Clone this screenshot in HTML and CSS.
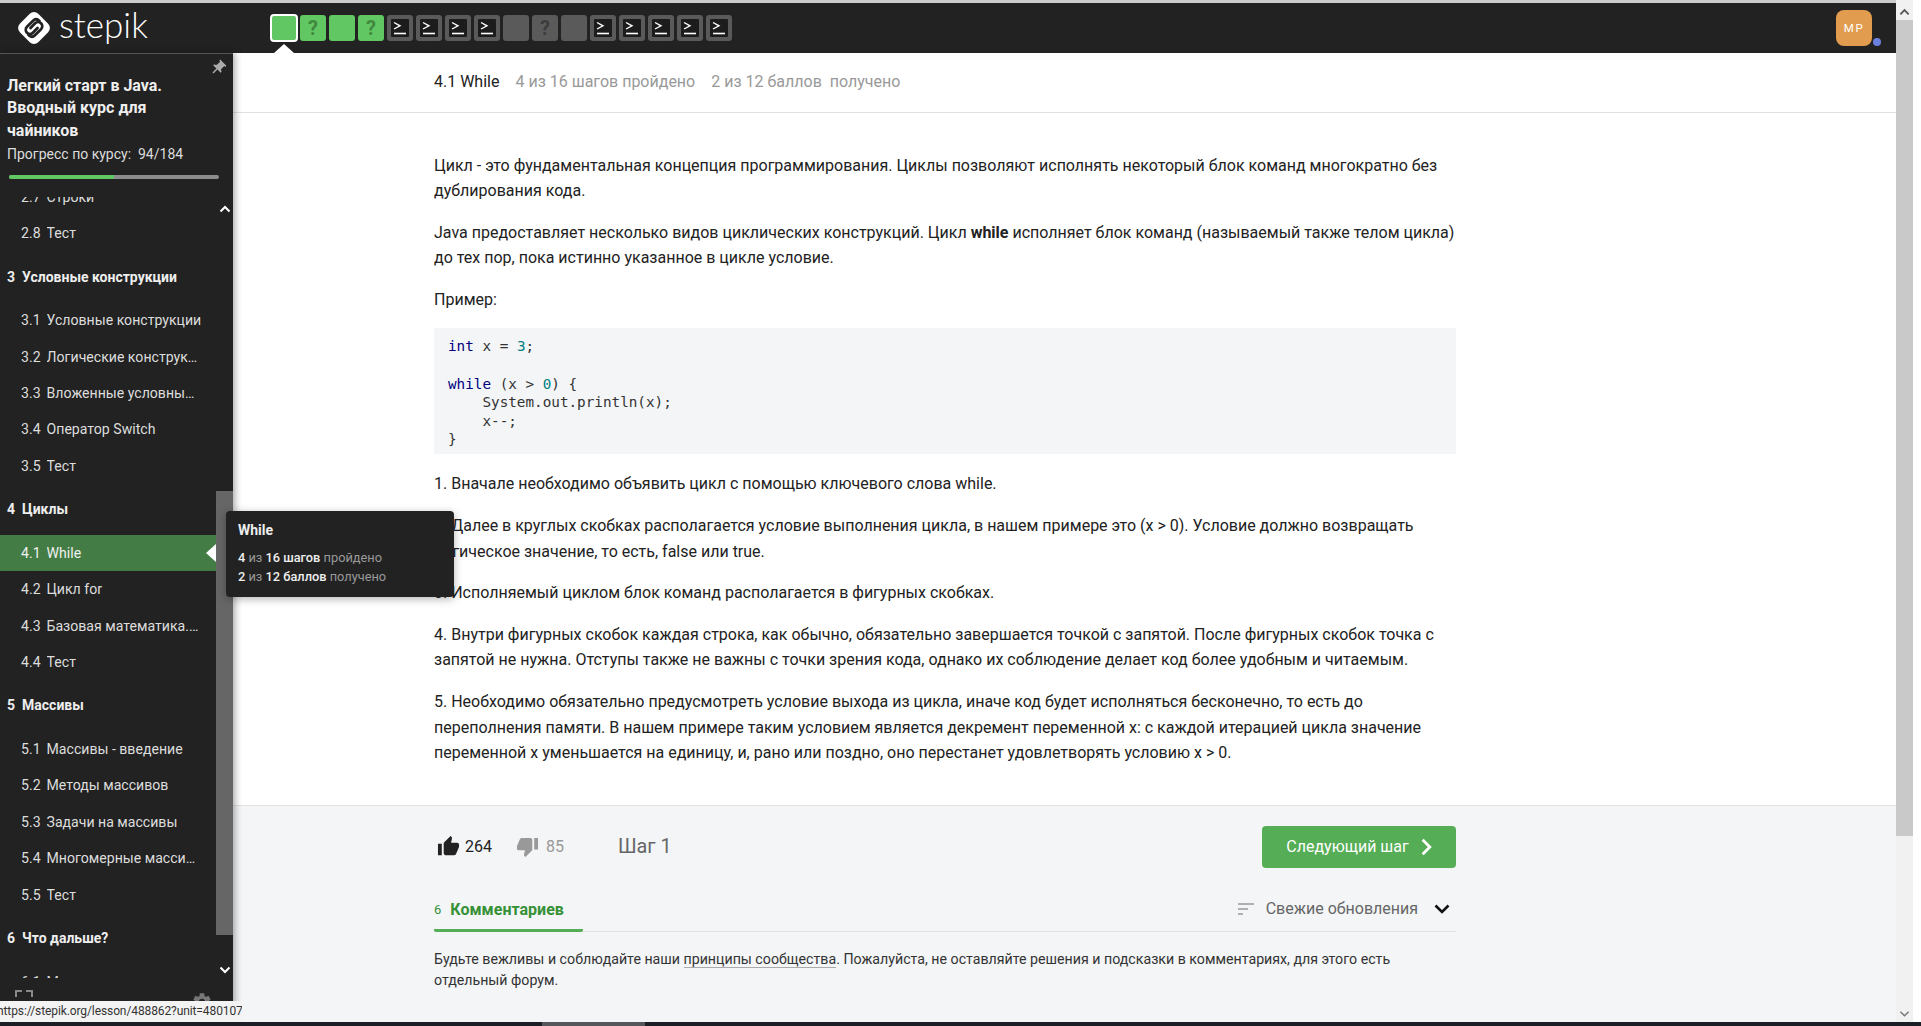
FILE: index.html
```html
<!DOCTYPE html>
<html lang="ru">
<head>
<meta charset="utf-8">
<title>4.1 While</title>
<link rel="stylesheet" href="styles.css">
</head>
<body>
<svg class="defs" width="0" height="0">
  <symbol id="prompt" viewBox="0 0 18 18">
    <rect width="18" height="18" rx="1" fill="#1c1c1c"/>
    <path d="M3 3.5 L9 6.8 L3 10" fill="none" stroke="#fff" stroke-width="1.4"/>
    <path d="M3 14.5 H15" stroke="#fff" stroke-width="1.6"/>
  </symbol>
</svg>
<div class="app">
  <div class="page">
    <div class="window">
      <header class="topbar">
        <div class="brand">
          <svg class="logo" viewBox="0 0 32 32" aria-hidden="true">
            <rect x="3" y="3" width="26" height="26" rx="6" fill="#fff" transform="rotate(45 16 16)"/>
            <path d="M21.5 9 l-.8 -.6 a4.2 4.2 0 0 0 -5.6 .3 L9 14.8 a4.2 4.2 0 0 0 0 5.9 a4.2 4.2 0 0 0 5.9 0 L19.5 16" fill="none" stroke="#222" stroke-width="2.8" stroke-linecap="round"/>
            <path d="M10.5 23 l.8 .6 a4.2 4.2 0 0 0 5.6 -.3 L23 17.2 a4.2 4.2 0 0 0 0 -5.9 a4.2 4.2 0 0 0 -5.9 0 L12.5 16" fill="none" stroke="#222" stroke-width="2.8" stroke-linecap="round"/>
          </svg>
          <span class="wordmark">stepik</span>
        </div>
        <nav class="steps">
          <div class="tile green current"></div>
          <div class="tile green">?</div>
          <div class="tile green"></div>
          <div class="tile green">?</div>
          <div class="tile gray"><svg class="prompt"><use href="#prompt"/></svg></div>
          <div class="tile gray"><svg class="prompt"><use href="#prompt"/></svg></div>
          <div class="tile gray"><svg class="prompt"><use href="#prompt"/></svg></div>
          <div class="tile gray"><svg class="prompt"><use href="#prompt"/></svg></div>
          <div class="tile gray"></div>
          <div class="tile gray">?</div>
          <div class="tile gray"></div>
          <div class="tile gray"><svg class="prompt"><use href="#prompt"/></svg></div>
          <div class="tile gray"><svg class="prompt"><use href="#prompt"/></svg></div>
          <div class="tile gray"><svg class="prompt"><use href="#prompt"/></svg></div>
          <div class="tile gray"><svg class="prompt"><use href="#prompt"/></svg></div>
          <div class="tile gray"><svg class="prompt"><use href="#prompt"/></svg></div>
        </nav>
        <div class="avatar">MP<span class="avatar-dot"></span></div>
      </header>
      <div class="workspace">
        <aside class="sidebar">
          <div class="course">
            <svg class="pin" viewBox="0 0 24 24" aria-hidden="true"><path d="M16 9V4h1c.55 0 1-.45 1-1s-.45-1-1-1H7c-.55 0-1 .45-1 1s.45 1 1 1h1v5c0 1.66-1.34 3-3 3v2h5.97v7l1 1 1-1v-7H19v-2c-1.66 0-3-1.34-3-3z" fill="#aaa" transform="rotate(45 12 12)"/></svg>
            <h1 class="course-title">Легкий старт в Java. Вводный курс для чайников</h1>
            <div class="course-progress">Прогресс по курсу:&nbsp; 94/184</div>
            <div class="bar"><div class="bar-fill" style="width:50%"></div></div>
          </div>
          <div class="toc">
            <div class="toc-inner">
              <a class="item"><span class="num">2.7</span><span class="label">Строки</span></a>
              <a class="item"><span class="num">2.8</span><span class="label">Тест</span></a>
              <div class="section"><span>3</span><span>Условные конструкции</span></div>
              <a class="item"><span class="num">3.1</span><span class="label">Условные конструкции</span></a>
              <a class="item"><span class="num">3.2</span><span class="label">Логические конструкции</span></a>
              <a class="item"><span class="num">3.3</span><span class="label">Вложенные условные конструкции</span></a>
              <a class="item"><span class="num">3.4</span><span class="label">Оператор Switch</span></a>
              <a class="item"><span class="num">3.5</span><span class="label">Тест</span></a>
              <div class="section"><span>4</span><span>Циклы</span></div>
              <a class="item active"><span class="num">4.1</span><span class="label">While</span></a>
              <a class="item"><span class="num">4.2</span><span class="label">Цикл for</span></a>
              <a class="item"><span class="num">4.3</span><span class="label">Базовая математика. Операции</span></a>
              <a class="item"><span class="num">4.4</span><span class="label">Тест</span></a>
              <div class="section"><span>5</span><span>Массивы</span></div>
              <a class="item"><span class="num">5.1</span><span class="label">Массивы - введение</span></a>
              <a class="item"><span class="num">5.2</span><span class="label">Методы массивов</span></a>
              <a class="item"><span class="num">5.3</span><span class="label">Задачи на массивы</span></a>
              <a class="item"><span class="num">5.4</span><span class="label">Многомерные массивы</span></a>
              <a class="item"><span class="num">5.5</span><span class="label">Тест</span></a>
              <div class="section"><span>6</span><span>Что дальше?</span></div>
              <a class="item"><span class="num">6.1</span><span class="label">Материалы</span></a>
            </div>
          </div>
          <div class="side-foot">
            <svg class="fullscreen" viewBox="0 0 18 18" aria-hidden="true"><path d="M1 7 V1 H7 M11 1 H17 V7" fill="none" stroke="#888" stroke-width="2"/></svg>
            <svg class="gear" viewBox="0 0 24 24" aria-hidden="true"><path d="M19.14 12.94c.04-.3.06-.61.06-.94 0-.32-.02-.64-.07-.94l2.03-1.58c.18-.14.23-.41.12-.61l-1.92-3.32c-.12-.22-.37-.29-.59-.22l-2.39.96c-.5-.38-1.03-.7-1.62-.94l-.36-2.54c-.04-.24-.24-.41-.48-.41h-3.84c-.24 0-.43.17-.47.41l-.36 2.54c-.59.24-1.13.57-1.62.94l-2.39-.96c-.22-.08-.47 0-.59.22L2.74 8.87c-.12.21-.08.47.12.61l2.03 1.58c-.05.3-.09.63-.09.94s.02.64.07.94l-2.03 1.58c-.18.14-.23.41-.12.61l1.92 3.32c.12.22.37.29.59.22l2.39-.96c.5.38 1.03.7 1.62.94l.36 2.54c.05.24.24.41.48.41h3.84c.24 0 .44-.17.47-.41l.36-2.54c.59-.24 1.13-.56 1.62-.94l2.39.96c.22.08.47 0 .59-.22l1.92-3.32c.12-.22.07-.47-.12-.61l-2.01-1.58zM12 15.6c-1.98 0-3.6-1.62-3.6-3.6s1.62-3.6 3.6-3.6 3.6 1.62 3.6 3.6-1.62 3.6-3.6 3.6z" fill="#777"/></svg>
          </div>
          <svg class="chev chev-up" viewBox="0 0 12 8" aria-hidden="true"><path d="M1.5 6.5 L6 2 L10.5 6.5" fill="none" stroke="#fff" stroke-width="2"/></svg>
          <svg class="chev chev-down" viewBox="0 0 12 8" aria-hidden="true"><path d="M1.5 1.5 L6 6 L10.5 1.5" fill="none" stroke="#fff" stroke-width="2"/></svg>
          <div class="side-thumb"></div>
          <div class="tooltip">
            <div class="tooltip-title">While</div>
            <div class="tooltip-line"><b>4</b> из <b>16 шагов</b> пройдено</div>
            <div class="tooltip-line"><b>2</b> из <b>12 баллов</b> получено</div>
          </div>
          <div class="status-url">https://stepik.org/lesson/488862?unit=480107</div>
        </aside>
        <main class="main">
          <div class="lesson-head">
            <span class="lesson-name">4.1 While</span>
            <span class="lesson-meta">4 из 16 шагов пройдено</span>
            <span class="lesson-meta">2 из 12 баллов&nbsp; получено</span>
          </div>
          <article class="article">
            <p>Цикл - это фундаментальная концепция программирования. Циклы позволяют исполнять некоторый блок команд многократно без дублирования кода.</p>
            <p>Java предоставляет несколько видов циклических конструкций. Цикл <b>while</b> исполняет блок команд (называемый также телом цикла) до тех пор, пока истинно указанное в цикле условие.</p>
            <p>Пример:</p>
<pre class="code"><span class="kw">int</span> x = <span class="nm">3</span>;

<span class="kw">while</span> (x &gt; <span class="nm">0</span>) {
    System.out.println(x);
    x--;
}</pre>
            <p>1. Вначале необходимо объявить цикл с помощью ключевого слова while.</p>
            <p>2. Далее в круглых скобках располагается условие выполнения цикла, в нашем примере это (x &gt; 0). Условие должно возвращать логическое значение, то есть, false или true.</p>
            <p>3. Исполняемый циклом блок команд располагается в фигурных скобках.</p>
            <p>4. Внутри фигурных скобок каждая строка, как обычно, обязательно завершается точкой с запятой. После фигурных скобок точка с запятой не нужна. Отступы также не важны с точки зрения кода, однако их соблюдение делает код более удобным и читаемым.</p>
            <p>5. Необходимо обязательно предусмотреть условие выхода из цикла, иначе код будет исполняться бесконечно, то есть до переполнения памяти. В нашем примере таким условием является декремент переменной x: с каждой итерацией цикла значение переменной x уменьшается на единицу, и, рано или поздно, оно перестанет удовлетворять условию x &gt; 0.</p>
          </article>
          <section class="foot">
            <div class="foot-inner">
              <div class="actions">
                <svg class="thumb" viewBox="0 0 24 24" aria-hidden="true"><path d="M1 21h4V9H1v12zm22-11c0-1.1-.9-2-2-2h-6.31l.95-4.57.03-.32c0-.41-.17-.79-.44-1.06L14.17 1 7.59 7.59C7.22 7.95 7 8.45 7 9v10c0 1.1.9 2 2 2h9c.83 0 1.54-.5 1.84-1.22l3.02-7.05c.09-.23.14-.47.14-.73v-2z" fill="#222"/></svg>
                <span class="likes">264</span>
                <svg class="thumb thumb-down" viewBox="0 0 24 24" aria-hidden="true"><path d="M15 3H6c-.83 0-1.54.5-1.84 1.22l-3.02 7.05c-.09.23-.14.47-.14.73v2c0 1.1.9 2 2 2h6.31l-.95 4.57-.03.32c0 .41.17.79.44 1.06L9.83 23l6.59-6.59c.36-.36.58-.86.58-1.41V5c0-1.1-.9-2-2-2zm4 0v12h4V3h-4z" fill="#999"/></svg>
                <span class="dislikes">85</span>
                <span class="step-label">Шаг 1</span>
                <button class="next">Следующий шаг
                  <svg class="next-icon" viewBox="0 0 10 16" aria-hidden="true"><path d="M1.5 1.5 L8 8 L1.5 14.5" fill="none" stroke="#fff" stroke-width="2.6"/></svg>
                </button>
              </div>
              <div class="tabs">
                <div class="tab"><span class="tab-count">6</span><span>Комментариев</span></div>
                <div class="sort">
                  <svg class="sort-icon" viewBox="0 0 16 12" aria-hidden="true"><path d="M0 1 H16 M0 6 H10 M0 11 H5" stroke="#999" stroke-width="1.6"/></svg>
                  <span>Свежие обновления</span>
                  <svg class="sort-chev" viewBox="0 0 16 10" aria-hidden="true"><path d="M1.5 1.5 L8 8 L14.5 1.5" fill="none" stroke="#111" stroke-width="2.6"/></svg>
                </div>
              </div>
              <p class="note">Будьте вежливы и соблюдайте наши <a class="note-link">принципы сообщества</a>. Пожалуйста, не оставляйте решения и подсказки в комментариях, для этого есть отдельный форум.</p>
            </div>
          </section>
        </main>
      </div>
    </div>
    <div class="vscroll">
      <div class="vbtn"><svg viewBox="0 0 12 8" aria-hidden="true"><path d="M1.5 6.5 L6 2 L10.5 6.5" fill="none" stroke="#555" stroke-width="2"/></svg></div>
      <div class="vthumb"></div>
      <div class="vtrack"></div>
      <div class="vbtn"><svg viewBox="0 0 12 8" aria-hidden="true"><path d="M1.5 1.5 L6 6 L10.5 1.5" fill="none" stroke="#777" stroke-width="1.6"/></svg></div>
    </div>
  </div>
  <div class="taskbar"><span class="task-a"></span><span class="task-b"></span></div>
</div>
</body>
</html>
```

FILE: styles.css
```css
* { box-sizing: border-box; }
html, body { margin: 0; padding: 0; background: #fff; }
body { font-family: Roboto, "Liberation Sans", sans-serif; color: #222; overflow: hidden; }
.defs { position: absolute; }
.app { width: 1921px; height: 1026px; display: flex; flex-direction: column; overflow: hidden; }
.page { flex: 1; min-height: 0; display: flex; padding-right: 8px; }
.window { flex: 1; min-width: 0; display: flex; flex-direction: column; }

.topbar { height: 53px; border-top: 3px solid #ccc; background: #222; display: flex; align-items: center; padding-right: 24px; flex: none; }
.brand { width: 271px; flex: none; display: flex; align-items: center; padding-left: 18px; }
.logo { width: 32px; height: 32px; flex: none; }
.wordmark { color: #fff; font-family: Lato, Roboto, sans-serif; font-weight: 300; font-size: 35px; line-height: 40px; margin-left: 9px; position: relative; top: -4px; }
.steps { display: flex; gap: 3px; }
.tile { width: 26px; height: 26px; border-radius: 3px; display: flex; align-items: center; justify-content: center; font-weight: 700; font-size: 20px; position: relative; }
.tile.green { background: #60c763; color: #41873f; }
.tile.gray { background: #5a5a5a; color: #3c3c3c; }
.tile.current { outline: 2px solid #fff; outline-offset: -1px; border-radius: 3px; }
.tile.current::after { content: ""; position: absolute; left: 3px; top: 29px; border: 10px solid transparent; border-top: 0; border-bottom: 9px solid #fff; }
.prompt { width: 18px; height: 18px; }
.avatar { margin-left: auto; width: 36px; height: 36px; border-radius: 8px; background: #e19c50; color: #fff; font-size: 11.5px; letter-spacing: 1.5px; display: flex; align-items: center; justify-content: center; position: relative; }
.avatar-dot { position: absolute; right: -9px; bottom: 0; width: 8px; height: 8px; border-radius: 50%; background: #6c80e0; }

.workspace { flex: 1; min-height: 0; display: flex; }
.sidebar { width: 233px; flex: none; background: #222; border-top: 1px solid #555; color: #ddd; display: flex; flex-direction: column; position: relative; box-shadow: 2px 0 7px rgba(0,0,0,.35); z-index: 2; }
.course { height: 143px; flex: none; padding: 21px 14px 0 7px; position: relative; }
.pin { position: absolute; left: 209px; top: 5px; width: 18px; height: 18px; }
.course-title { margin: 0; width: 180px; font-size: 16px; font-weight: 700; line-height: 22.4px; color: #eee; }
.course-progress { margin-top: 1px; font-size: 14px; line-height: 22px; color: #ddd; white-space: nowrap; }
.bar { margin: 10px 0 0 2px; width: 210px; height: 4px; border-radius: 2px; background: #8c8c8c; overflow: hidden; }
.bar-fill { height: 100%; background: #60c763; }

.toc { height: 781px; flex: none; overflow: hidden; }
.toc-inner { margin-top: -18.3px; }
.item { display: flex; align-items: center; gap: 6px; height: 36.4px; padding-left: 21px; font-size: 14.1px; color: #ddd; width: 216px; position: relative; }
.num { flex: none; }
.label { width: 155px; white-space: nowrap; overflow: hidden; text-overflow: ellipsis; }
.item.active { background: #437d45; color: #f0f0f0; }
.item.active::after { content: ""; position: absolute; right: 0; top: 9px; border: 9px solid transparent; border-left: 0; border-right: 10px solid #fff; }
.section { display: flex; align-items: center; gap: 7px; height: 50.6px; padding-left: 7px; font-size: 14px; font-weight: 700; color: #eee; }

.side-foot { flex: 1; position: relative; }
.fullscreen { position: absolute; left: 15px; top: 12px; width: 18px; height: 18px; }
.gear { position: absolute; left: 191px; top: 13px; width: 22px; height: 22px; }
.chev { position: absolute; left: 219px; width: 12px; height: 8px; }
.chev-up { top: 151px; }
.chev-down { top: 912px; }
.side-thumb { position: absolute; left: 216px; top: 437px; width: 17px; height: 444px; background: #666; }
.tooltip { position: absolute; left: 226px; top: 457px; width: 228px; height: 86px; background: #222; border-radius: 4px; padding: 9px 12px; box-shadow: 0 2px 8px rgba(0,0,0,.3); color: #999; font-size: 12.8px; white-space: nowrap; }
.tooltip-title { font-size: 14px; font-weight: 700; color: #eee; line-height: 20px; margin-bottom: 8px; }
.tooltip-line { line-height: 19px; }
.tooltip-line b { font-weight: 500; color: #eee; }
.status-url { position: absolute; left: 0; bottom: 0; width: 242px; height: 21px; background: #f3f3f3; color: #333; font-family: Roboto, sans-serif; font-size: 12px; letter-spacing: -0.1px; line-height: 21px; white-space: nowrap; overflow: hidden; text-indent: -3px; }

.main { flex: 1; min-width: 0; display: flex; flex-direction: column; background: #fff; }
.lesson-head { height: 60px; flex: none; border-bottom: 1px solid #e1e1e1; padding: 18px 0 0 201px; font-size: 16px; line-height: 22px; display: flex; gap: 16px; }
.lesson-name { color: #222; }
.lesson-meta { color: #999; }
.article { flex: none; padding: 39.5px 0 23px 201px; width: 1223px; font-size: 16px; line-height: 25.6px; }
.article p { margin: 0 0 16px; }
.article b { font-weight: 700; }
.code { margin: 0 0 17px; background: #f3f5f7; padding: 9px 14px; height: 126px; font-family: "DejaVu Sans Mono", "Liberation Mono", monospace; font-size: 14.3px; line-height: 18.6px; color: #333; }
.kw { color: #000080; }
.nm { color: #008080; }

.foot { flex: 1; background: #f3f5f7; border-top: 1px solid #e1e1e1; padding: 20px 0 0 201px; }
.foot-inner { width: 1022px; }
.actions { display: flex; align-items: center; height: 42px; }
.thumb { width: 23px; height: 23px; margin-left: 3px; flex: none; }
.likes { font-size: 16px; margin-left: 5px; }
.thumb-down { margin-left: 24px; }
.dislikes { font-size: 16px; color: #999; margin-left: 7px; }
.step-label { font-size: 19.8px; color: #666; margin-left: 54px; }
.next { margin-left: auto; width: 194px; height: 42px; border: 0; border-radius: 4px; background: #55ad55; color: #fff; font: 400 16px Roboto, sans-serif; display: flex; align-items: center; justify-content: center; gap: 12px; }
.next-icon { width: 11px; height: 18px; }
.tabs { margin-top: 19px; height: 45px; border-bottom: 1px solid #e1e1e1; display: flex; align-items: center; justify-content: space-between; }
.tab { height: 45px; width: 149px; border-bottom: 3px solid #55ad55; border-radius: 0 0 2px 2px; display: flex; align-items: center; gap: 9px; font-size: 16px; font-weight: 700; color: #369136; padding-top: 3px; margin-bottom: -1px; }
.tab-count { font-size: 13px; font-weight: 400; }
.sort { display: flex; align-items: center; font-size: 16px; color: #666; padding-right: 6px; }
.sort-icon { width: 16px; height: 12px; margin-right: 12px; }
.sort-chev { width: 16px; height: 10px; margin-left: 16px; }
.note { margin: 17px 0 0; width: 985px; font-size: 14.2px; line-height: 21px; color: #333; }
.note-link { border-bottom: 1px solid #aaa; }

.vscroll { width: 17px; flex: none; display: flex; flex-direction: column; background: #f1f1f1; padding-top: 3px; }
.vbtn { height: 17px; flex: none; display: flex; align-items: center; justify-content: center; background: #f1f1f1; }
.vbtn svg { width: 11px; height: 8px; }
.vthumb { height: 816px; flex: none; background: #c9c9c9; }
.vtrack { flex: 1; }

.taskbar { height: 4px; flex: none; background: #1c1e26; display: flex; position: relative; z-index: 3; }
.task-a { width: 542px; }
.task-b { width: 103px; background: #55565c; }
```
